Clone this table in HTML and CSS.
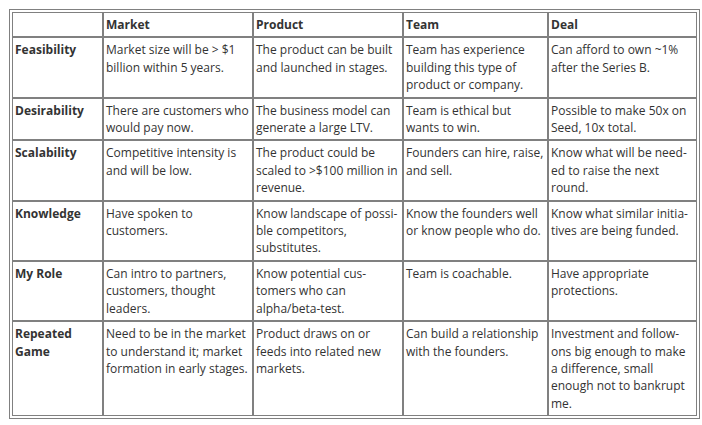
FILE: index.html
```html
<!DOCTYPE html>
<html lang="en">
<head>
<meta charset="utf-8">
<link rel="stylesheet" href="styles.css">
</head>
<body>
<table class="grid">
  <colgroup>
    <col class="c1"><col class="c2"><col class="c3"><col class="c4"><col class="c5">
  </colgroup>
  <thead>
    <tr><th></th><th>Market</th><th>Product</th><th>Team</th><th>Deal</th></tr>
  </thead>
  <tbody>
    <tr>
      <th>Feasibility</th>
      <td>Market size will be &gt; $1 billion within 5 years.</td>
      <td>The product can be built and launched in stages.</td>
      <td>Team has experience building this type of product or company.</td>
      <td>Can afford to own ~1% after the Series B.</td>
    </tr>
    <tr>
      <th>Desirability</th>
      <td>There are customers who would pay now.</td>
      <td>The business model can generate a large LTV.</td>
      <td>Team is ethical but wants to win.</td>
      <td>Possible to make 50x on Seed, 10x total.</td>
    </tr>
    <tr>
      <th>Scalability</th>
      <td>Competitive intensity is and will be low.</td>
      <td>The product could be scaled to &gt;$100 million in revenue.</td>
      <td>Founders can hire, raise, and sell.</td>
      <td>Know what will be need&shy;ed to raise the next round.</td>
    </tr>
    <tr>
      <th>Knowledge</th>
      <td>Have spoken to customers.</td>
      <td>Know landscape of possi&shy;ble competitors, substitutes.</td>
      <td>Know the founders well or know people who do.</td>
      <td>Know what similar initia&shy;tives are being funded.</td>
    </tr>
    <tr>
      <th>My Role</th>
      <td>Can intro to partners, customers, thought leaders.</td>
      <td>Know potential cus&shy;tomers who can alpha/beta-test.</td>
      <td>Team is coachable.</td>
      <td>Have appropriate protections.</td>
    </tr>
    <tr>
      <th>Repeated Game</th>
      <td>Need to be in the market to understand it; market formation in early stages.</td>
      <td>Product draws on or feeds into related new markets.</td>
      <td>Can build a relationship with the founders.</td>
      <td>Investment and follow-ons big enough to make a difference, small enough not to bankrupt me.</td>
    </tr>
  </tbody>
</table>
</body>
</html>
```
FILE: styles.css
```css
html, body {
  background: #ffffff;
}
body {
  margin: 9px 0 0 9px;
  font-family: "Open Sans", "Liberation Sans", sans-serif;
  font-size: 12px;
  line-height: 17.4px;
  color: #333333;
}
.grid {
  border-collapse: separate;
  border-spacing: 0;
  border: 1px solid #808080;
  padding: 2px;
  table-layout: fixed;
  width: 691px;
}
.c1 { width: 91px; }
.c2 { width: 150px; }
.c3 { width: 150px; }
.c4 { width: 145px; }
.c5 { width: 149px; }
.grid th,
.grid td {
  border: 1px solid #808080;
  padding: 3px 2px;
  text-align: left;
  vertical-align: top;
}
.grid th {
  font-weight: 700;
}
```
